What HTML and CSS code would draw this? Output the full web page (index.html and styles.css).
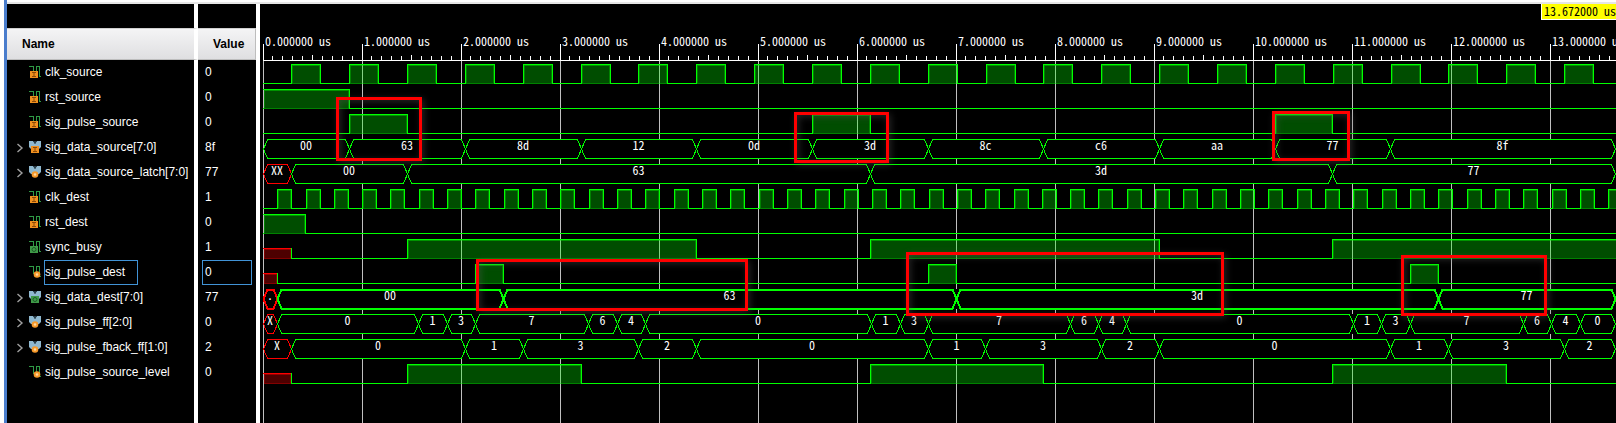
FILE: index.html
```html
<!DOCTYPE html>
<html lang="en">
<head>
<meta charset="utf-8">
<title>Waveform viewer</title>
<link rel="stylesheet" href="styles.css">
</head>
<body>
<svg class="sprites" aria-hidden="true">
  <symbol id="wave" viewBox="0 0 12 12">
    <path d="M0 0.5H4.5V8M3.5 7.5H7.5V0.5H10.5V10.5H12" fill="none" stroke="#2f9a45" shape-rendering="crispEdges"/>
  </symbol>
  <symbol id="bus" viewBox="0 0 12 12">
    <path d="M0 0H4L6 3L8 0H12V6L10 8H2L0 6Z" fill="#8fb8cf"/>
    <path d="M4.5 0H5.5L6 1L6.5 0H7.5L6 3Z" fill="#35505f"/>
  </symbol>
  <symbol id="in" viewBox="0 0 12 12">
    <rect x="2" y="5" width="8" height="7" fill="#f0901e"/>
    <path d="M4 6.5H8M4 10.5H8M6 6.5V10.5" stroke="#8a4a08" fill="none"/>
  </symbol>
  <symbol id="out" viewBox="0 0 12 12">
    <rect x="2" y="5" width="8" height="7" fill="#3f9a48"/>
    <circle cx="6" cy="8.5" r="2" stroke="#1c5a26" fill="none"/>
  </symbol>
  <symbol id="reg" viewBox="0 0 12 12">
    <circle cx="6" cy="8.5" r="3.3" fill="#f79a2b"/>
    <circle cx="6" cy="8.5" r="1.3" fill="#ffd9a0"/>
  </symbol>
</svg>
<div class="viewer">
  <div class="signals">
    <table class="signal-table">
      <thead><tr><th class="name" scope="col">Name</th><th class="value" scope="col">Value</th></tr></thead>
      <tbody id="signal-rows"></tbody>
    </table>
  </div>
  <div class="waves">
    <svg id="plot" class="plot" role="img" aria-label="Signal waveforms"></svg>
    <div class="marker">13.672000 us</div>
    <div class="callout callout-a"></div>
    <div class="callout callout-b"></div>
    <div class="callout callout-c"></div>
    <div class="callout callout-d"></div>
    <div class="callout callout-e"></div>
    <div class="callout callout-f"></div>
  </div>
</div>
<script src="app.js"></script>
</body>
</html>
```
FILE: styles.css
```css
* {
  box-sizing: border-box;
}

body {
  margin: 0;
  background: #fff;
  font-family: "Liberation Sans", Arial, sans-serif;
  font-size: 12px;
}

.sprites {
  position: absolute;
  width: 0;
  height: 0;
}

.viewer {
  display: flex;
  min-height: 100vh;
  margin-left: 4px;
  border-left: 3px solid #4a7dcc;
}

.signals {
  flex: none;
  width: 253px;
  padding-top: 24px;
  margin-top: 2px;
  border-top: 2px solid #e6e6e6;
  background: linear-gradient(90deg, #000 187px, #fff 187px, #fff 191px, #000 191px, #000 249px, #fff 249px);
}

.signal-table {
  width: 249px;
  table-layout: fixed;
  border-spacing: 0;
  color: #fff;
}

.signal-table th {
  height: 32px;
  padding: 0;
  background: linear-gradient(#f4f4f5, #dfdfe1) padding-box;
  border-right: 1px solid #bdbdbd;
  border-top: 1px solid #cfcfcf;
  border-bottom: 1px solid #bdbdbd;
  color: #000;
  text-align: left;
}

.signal-table .name {
  width: 191px;
  padding-left: 15px;
  border-right: 4px solid #fff;
}

.signal-table .value {
  padding-left: 15px;
}

.signal-table td {
  height: 25px;
  padding: 0;
  vertical-align: top;
  white-space: nowrap;
}

.signal {
  display: flex;
  width: 187px;
  height: 25px;
  padding-left: 8px;
  overflow: hidden;
}

.expander {
  flex: none;
  display: flex;
  align-items: center;
  width: 14px;
  height: 25px;
  padding: 0;
  border: 0;
  background: none;
}

.chevron {
  width: 10px;
  height: 10px;
  fill: none;
  stroke: #a0a0a0;
  stroke-width: 1.4;
}

.icon {
  flex: none;
  width: 12px;
  height: 12px;
  margin-top: 6px;
  margin-right: 3px;
}

.label,
.reading {
  display: block;
  height: 25px;
  padding-top: 3px;
  border: 1px solid transparent;
  line-height: 16px;
}

.label {
  padding-right: 12px;
}

.reading {
  width: 50px;
  margin-left: 4px;
  padding-left: 2px;
}

.selected .label,
.selected .reading {
  border-color: #4193d6;
}

.waves {
  position: relative;
  flex: 1;
  min-width: 0;
  margin-top: 2px;
  border-top: 2px solid #e6e6e6;
  background: #000;
  overflow: hidden;
}

.plot {
  position: absolute;
  inset: 0;
  width: 100%;
  height: 100%;
}

.plot,
.marker {
  font-family: "Noto Sans CJK SC", "Liberation Mono", monospace;
  font-size: 12px;
  font-feature-settings: "hwid";
}

.plot text {
  fill: #fff;
}

.plot .center {
  text-anchor: middle;
}

.marker {
  position: absolute;
  top: 0;
  right: 0;
  height: 16px;
  padding-left: 2px;
  border-left: 1px solid #fff;
  border-bottom: 1px solid #fff;
  background: #ff0;
  color: #000;
  line-height: 14px;
  white-space: nowrap;
}

.callout {
  position: absolute;
  border: 3px solid #f00;
  box-shadow: 2px 2px 7px rgba(90, 90, 90, 0.4), inset 2px 2px 7px rgba(90, 90, 90, 0.4);
}

.callout-a { left: 76px; top: 93px; width: 86px; height: 64px; }
.callout-b { left: 534px; top: 108px; width: 95px; height: 51px; }
.callout-c { left: 1012px; top: 107px; width: 78px; height: 50px; }
.callout-d { left: 216px; top: 255px; width: 272px; height: 52px; }
.callout-e { left: 646px; top: 248px; width: 318px; height: 64px; }
.callout-f { left: 1141px; top: 251px; width: 146px; height: 61px; }
```
FILE: app.js
```js
// Edge positions are in viewer pixels; one microsecond spans 99 of them.
const START = 263, END = 1615, US = 99, ROW = 25;
const GREEN = '#00ff00', RED = '#ff0000';

function clock(first, period, width) {
  const spans = [];
  for (let x = first; x < 1640; x += period) {
    const a = Math.round(x);
    spans.push([a, a + width]);
  }
  return spans;
}

const signals = [
  { name: 'clk_source', value: '0', base: 'wave', kind: 'in', high: clock(291.2, 57.86, 29) },
  { name: 'rst_source', value: '0', base: 'wave', kind: 'in', high: [[263, 349]] },
  { name: 'sig_pulse_source', value: '0', base: 'wave', kind: 'in', high: [[349, 407], [812, 870], [1275, 1332]] },
  { name: 'sig_data_source[7:0]', value: '8f', base: 'bus', kind: 'in',
    bus: [[349, '00'], [465, '63'], [581, '8d'], [696, '12'], [812, '0d'], [928, '3d'], [1043, '8c'], [1159, 'c6'], [1275, 'aa'], [1390, '77'], [END, '8f']] },
  { name: 'sig_data_source_latch[7:0]', value: '77', base: 'bus', kind: 'reg',
    bus: [[291, 'XX'], [407, '00'], [870, '63'], [1332, '3d'], [END, '77']] },
  { name: 'clk_dest', value: '1', base: 'wave', kind: 'in', high: clock(277.2, 28.32, 14) },
  { name: 'rst_dest', value: '0', base: 'wave', kind: 'in', high: [[263, 305]] },
  { name: 'sync_busy', value: '1', base: 'wave', kind: 'out', unknown: 291, high: [[407, 696], [870, 1159], [1332, 1700]] },
  { name: 'sig_pulse_dest', value: '0', base: 'wave', kind: 'reg', selected: true, unknown: 277, high: [[475, 503], [928, 956], [1410, 1438]] },
  { name: 'sig_data_dest[7:0]', value: '77', base: 'bus', kind: 'out', bold: true,
    bus: [[277, '.'], [503, '00'], [956, '63'], [1438, '3d'], [END, '77']] },
  { name: 'sig_pulse_ff[2:0]', value: '0', base: 'bus', kind: 'reg',
    bus: [[277, 'X'], [418, '0'], [447, '1'], [475, '3'], [588, '7'], [617, '6'], [645, '4'], [871, '0'], [900, '1'], [928, '3'], [1070, '7'], [1098, '6'], [1126, '4'], [1353, '0'], [1381, '1'], [1410, '3'], [1523, '7'], [1551, '6'], [1580, '4'], [END, '0']] },
  { name: 'sig_pulse_fback_ff[1:0]', value: '2', base: 'bus', kind: 'reg',
    bus: [[291, 'X'], [465, '0'], [523, '1'], [638, '3'], [696, '2'], [928, '0'], [985, '1'], [1101, '3'], [1159, '2'], [1390, '0'], [1448, '1'], [1564, '3'], [END, '2']] },
  { name: 'sig_pulse_source_level', value: '0', base: 'wave', kind: 'reg', unknown: 291, high: [[407, 581], [870, 1043], [1332, 1506]] }
];

document.getElementById('signal-rows').innerHTML = signals.map(s => {
  const chevron = s.bus
    ? `<button class="expander" aria-label="Expand ${s.name}"><svg class="chevron" viewBox="0 0 10 10"><path d="M2.5 1L7 5L2.5 9"/></svg></button>`
    : '<span class="expander"></span>';
  const shift = s.base === 'bus' ? 0 : s.kind === 'reg' ? 2 : -1;
  return `<tr class="${s.selected ? 'selected' : ''}"><td><div class="signal">${chevron}` +
    `<svg class="icon" viewBox="0 0 12 12"><use href="#${s.base}"/><use href="#${s.kind}" x="${shift}"/></svg>` +
    `<span class="label">${s.name}</span></div></td><td><span class="reading">${s.value}</span></td></tr>`;
}).join('');

const out = [];
const rect = (x, y, w, h, fill, opacity = 1) =>
  out.push(`<rect x="${x}" y="${y}" width="${w}" height="${h}" fill="${fill}" fill-opacity="${opacity}"/>`);

// Filled level with a bright outline and a dimmer inner edge
function level(a, b, top, base, color) {
  rect(a + 1, top + 1, b - a - 1, base - top, color, 0.3);
  rect(a + 1, base, b - a - 1, 1, color, 0.3);
  rect(a + 1, top + 1, b - a - 1, 1, color, 0.4);
  rect(a + 1, top + 2, 1, base - top - 2, color, 0.3);
  rect(b - 1, top + 2, 1, base - top - 2, color, 0.3);
  rect(a, top, b - a + 1, 1, color);
}

for (let i = 0; i < 14; i++) {
  rect(START + i * US, 61, 1, '100%', '#c0c0c0');
  rect(START + i * US, 44, 1, 16, '#fff');
  for (let t = 1; t < 10; t++) {
    const height = t === 5 ? 5 : 4;
    rect(Math.floor(START + i * US + t * US / 10), 60 - height, 1, height, '#fff');
  }
  out.push(`<text x="${START + i * US + 2}" y="46">${i}.000000 us</text>`);
}
rect(START, 60, '100%', 1, '#fff');

signals.forEach((s, i) => {
  const top = 64 + i * ROW, base = 83 + i * ROW;
  if (s.bus) {
    let a = START;
    const y1 = top + 0.5, y2 = base + 0.5, mid = (y1 + y2) / 2;
    rect(START + 1, top, END - START, base - top + 1, '#000');
    s.bus.forEach(([b, text], n) => {
      const color = n === 0 && /[X.]/.test(text) ? RED : GREEN;
      const l = a + 0.5, r = b + 0.5;
      out.push(`<polygon points="${l},${mid} ${l + 4},${y1} ${r - 4},${y1} ${r},${mid} ${r - 4},${y2} ${l + 4},${y2}" fill="none" stroke="${color}" stroke-width="${s.bold ? 2 : 1}"/>`);
      out.push(`<text class="center" x="${(a + b) / 2}" y="${base - 8}">${text}</text>`);
      a = b;
    });
    return;
  }
  let x = START;
  if (s.unknown) {
    level(START, s.unknown, base - 10, base, RED);
    rect(s.unknown, base - 10, 1, 10, GREEN);
    x = s.unknown;
  }
  s.high.forEach(([a, b]) => {
    rect(x, base, a - x + 1, 1, GREEN);
    level(a, b, top, base, GREEN);
    if (a > START) rect(a, top, 1, base - top + 1, GREEN);
    rect(b, top, 1, base - top + 1, GREEN);
    x = b;
  });
  rect(x, base, '100%', 1, GREEN);
});

document.getElementById('plot').innerHTML =
  `<g transform="translate(-260 -4)" shape-rendering="crispEdges">${out.join('')}</g>`;
```
